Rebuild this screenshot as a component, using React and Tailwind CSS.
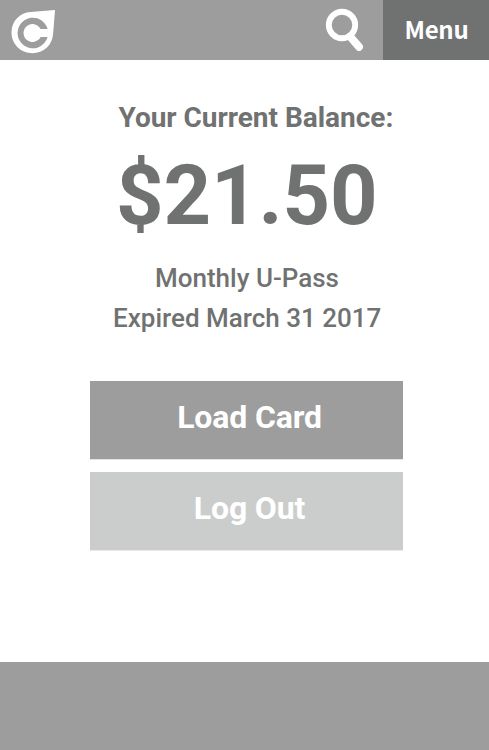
function Logo() {
  return (
    <svg className="block h-[60px] w-[60px] shrink-0" viewBox="0 0 60 60">
      <path
        d="M55 10L53.2 33C52.4 45.5 43.5 53.2 32.5 53.2C20.8 53.2 11.5 44 11.5 32.5C11.5 21 20 12.6 30.5 12Z"
        fill="#fff"
      />
      <path
        d="M47.6 29A15.3 15.3 0 1 0 47.6 37H40.6A9 9 0 1 1 40.6 29Z"
        fill="#9d9d9d"
      />
    </svg>
  );
}

function SearchIcon() {
  return (
    <svg className="block h-[60px] w-[58px] shrink-0" viewBox="325 0 58 60" fill="none" stroke="#fff">
      <circle cx="342" cy="25" r="13.2" strokeWidth="5.9" />
      <path d="M350.5 37L359 46.9" strokeWidth="7.9" strokeLinecap="round" />
    </svg>
  );
}

export default function App() {
  return (
    <div className="flex h-[750px] w-[489px] flex-col bg-white font-['Roboto',sans-serif] text-[#707271]">
      <header className="flex h-[60px] shrink-0 bg-[#9d9d9d]">
        <Logo />
        <div className="flex-1" />
        <SearchIcon />
        <button className="h-[60px] w-[106px] bg-[#707271] pb-[3px] pl-px font-['Noto_Sans_CJK_SC',sans-serif] text-[24px] leading-[57px] font-bold tracking-[-0.3px] text-white">
          Menu
        </button>
      </header>

      <main className="flex flex-1 flex-col pt-[38px] whitespace-nowrap">
        <h1 className="pl-[118.5px] text-[28px] leading-10 font-bold tracking-[-0.02px]">Your Current Balance:</h1>
        <p className="mt-4 pl-[116px] text-[83px] leading-[84px] font-bold tracking-[-0.1px]">$21.50</p>
        <div className="mt-5 text-[26px] leading-10 font-medium">
          <p className="pl-[155px]">Monthly U-Pass</p>
          <p className="pl-[113px]">Expired March 31 2017</p>
        </div>
        <div className="mt-[43px] ml-[90px] flex w-[313px] flex-col gap-3 text-[32px] leading-[72px] font-bold tracking-[-0.15px] text-white">
          <button className="h-[79px] border-b border-[#e3e3e3] bg-[#9d9d9d] pb-[6px] pl-[6px]">Load Card</button>
          <button className="h-[79px] border-b border-[#e8e8e8] bg-[#cbcdcc] pb-[6px] pl-[6px]">Log Out</button>
        </div>
      </main>

      <footer className="h-[88px] shrink-0 bg-[#9d9d9d]" />
    </div>
  );
}
